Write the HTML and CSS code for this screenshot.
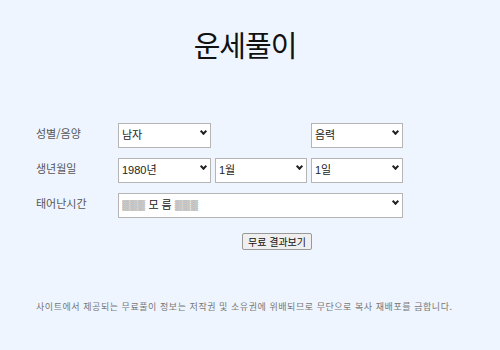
FILE: index.html
```html
<!DOCTYPE html>
<html lang="ko">
<head>
    <meta charset="UTF-8">
    <title>운세풀이</title>
    <link rel="stylesheet" href="styles.css">
</head>
<body>
<h1 class="title">운세풀이</h1>

<form class="fortune-form" action="#" method="POST">
    <label class="field-label">성별/음양</label>
    <div class="select-box">
        <select name="gender">
            <option>남자</option>
            <option>여자</option>
        </select>
    </div>
    <div class="select-box col-last">
        <select name="calendar">
            <option>음력</option>
            <option>양력</option>
        </select>
    </div>

    <label class="field-label">생년월일</label>
    <div class="select-box">
        <select name="year">
            <option>1980년</option>
        </select>
    </div>
    <div class="select-box">
        <select name="month">
            <option>1월</option>
        </select>
    </div>
    <div class="select-box">
        <select name="day">
            <option>1일</option>
        </select>
    </div>

    <label class="field-label">태어난시간</label>
    <div class="select-box col-wide">
        <select name="hour">
            <option>▒▒▒ 모 름 ▒▒▒</option>
        </select>
    </div>

    <div class="button-row">
        <button type="submit">무료 결과보기</button>
    </div>
</form>

<p class="notice">사이트에서 제공되는 무료풀이 정보는 저작권 및 소유권에 위배되므로 무단으로 복사 재배포를 금합니다.</p>
</body>
</html>
```

FILE: styles.css
```css
body {
    margin: 0;
    background-color: #eef5fe;
    font-family: "Noto Sans CJK KR", "Noto Sans", sans-serif;
    color: #333;
}

.title {
    margin: 0;
    padding: 24px 10px 0 0;
    text-align: center;
    font-size: 29px;
    font-weight: 400;
    letter-spacing: -1px;
    color: #111;
    line-height: 40px;
}

.fortune-form {
    display: grid;
    grid-template-columns: 78px 93px 92px 92px;
    grid-auto-rows: 25px;
    column-gap: 4px;
    row-gap: 10px;
    margin: 56px 0 0 36px;
    align-items: center;
}

.field-label {
    grid-column: 1;
    font-size: 11px;
    color: #555;
}

.select-box {
    position: relative;
    height: 25px;
}

.select-box::after {
    content: "";
    position: absolute;
    right: 5px;
    top: 9px;
    width: 3px;
    height: 3px;
    border-right: 2px solid #222;
    border-bottom: 2px solid #222;
    transform: rotate(45deg);
    pointer-events: none;
}

.col-last {
    grid-column: 4;
}

.col-wide {
    grid-column: 2 / 5;
}

select {
    appearance: none;
    width: 100%;
    height: 25px;
    margin: 0;
    padding: 0 18px 0 3px;
    border: 1px solid #b5b5b5;
    border-radius: 0;
    background-color: #fff;
    font-family: "Liberation Sans", "Noto Sans CJK KR", sans-serif;
    font-size: 11px;
    color: #222;
    outline: none;
}

.button-row {
    grid-column: 1 / 5;
    display: flex;
    padding-left: 206px;
    margin-top: 8px;
}

button {
    font-family: "Noto Sans CJK KR", sans-serif;
    font-size: 10px;
    padding: 0 5px;
    height: 17px;
    width: 70px;
    background-color: #efefef;
    border: 1px solid #999;
    border-radius: 2px;
    color: #111;
    cursor: pointer;
    line-height: 15px;
}

.notice {
    margin: 50px 0 0 36px;
    font-size: 9px;
    color: #777;
    letter-spacing: 0.55px;
}
```
